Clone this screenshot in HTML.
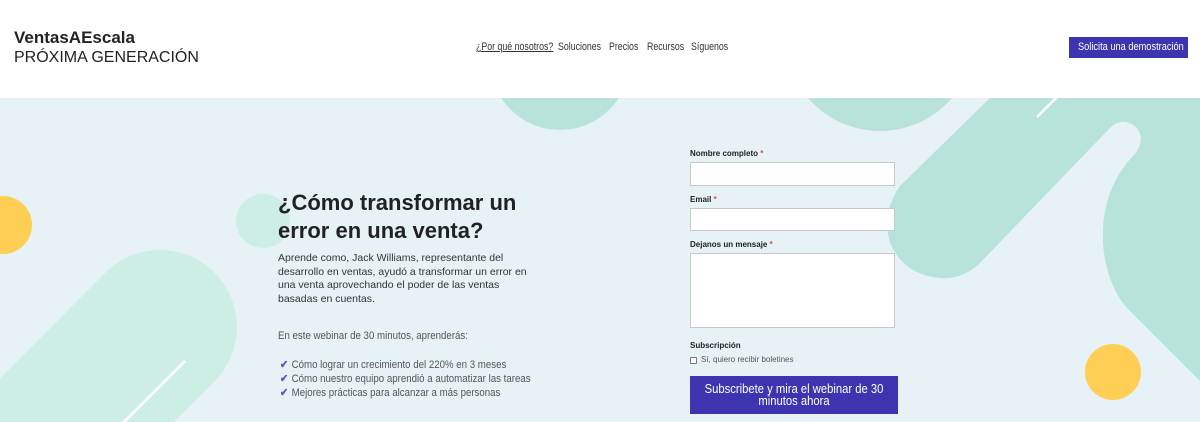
<!DOCTYPE html>
<html><head><meta charset="utf-8"><style>
*{margin:0;padding:0;box-sizing:border-box}
body{width:1200px;height:422px;overflow:hidden;background:#fff;font-family:"Liberation Sans",sans-serif;position:relative}
.a{position:absolute;white-space:nowrap}
header{position:absolute;top:0;left:0;width:1200px;height:98px;background:#fff}
.hero{position:absolute;top:98px;left:0;width:1200px;height:324px;background:#e6f2f6;overflow:hidden}
.nav{font-size:11px;color:#333;top:41px;transform:scaleX(0.8);transform-origin:left}
.lbl{font-size:8px;font-weight:bold;color:#222}
.lbl span{color:#e04a4a}
.inp{position:absolute;left:690px;width:205px;background:#fff;border:1px solid #c8c8c8}
.li{font-size:11px;color:#555;transform:scaleX(0.88);transform-origin:left}
.li b{color:#6a4fc0;font-size:11px;margin-right:4px}
</style></head><body>
<header>
<div class="a" style="left:14px;top:28px;font-size:17px;font-weight:bold;color:#222">VentasAEscala</div>
<div class="a" style="left:14px;top:49px;font-size:16px;color:#222">PRÓXIMA GENERACIÓN</div>
<div class="a nav" style="left:476px;text-decoration:underline">¿Por qué nosotros?</div>
<div class="a nav" style="left:558px">Soluciones</div>
<div class="a nav" style="left:609px">Precios</div>
<div class="a nav" style="left:647px">Recursos</div>
<div class="a nav" style="left:691px">Síguenos</div>
<div class="a" style="left:1069px;top:37px;width:119px;height:21px;background:#3d35b0;"></div>
<div class="a" style="left:1078px;top:37px;color:#fff;font-size:11px;line-height:21px;transform:scaleX(0.84);transform-origin:left">Solicita una demostración</div>
</header>
<div class="hero">
<svg width="1200" height="324" style="position:absolute;left:0;top:0">
<g transform="translate(0,-98)">
<circle cx="560" cy="60" r="70" fill="#b8e3da"/>
<circle cx="880" cy="36" r="95" fill="#b8e3da"/>
<circle cx="263" cy="221" r="27" fill="#cdeee4"/>
<circle cx="3" cy="225" r="29" fill="#ffcf55"/>
<line x1="160" y1="327" x2="-120" y2="607" stroke="#cdeee4" stroke-width="154" stroke-linecap="round"/>
<line x1="185" y1="361" x2="122" y2="424" stroke="#fff" stroke-width="2.5"/>
<path d="M990,98 L1210,98 L1210,391 L1130,311 C1098,280 1088,200 1135,154 Q1146,138 1136,127 Q1122,116 1110,128 L978,265 Q960,280 940,278 Q905,275 891,245 Q880,215 900,186 Z" fill="#b8e3da"/>
<line x1="1037" y1="117" x2="1058" y2="96" stroke="#fff" stroke-width="2.5"/>
<circle cx="1113" cy="372" r="28" fill="#ffcf55"/>
</g>
</svg>
</div>
<div class="a" style="left:278px;top:189px;font-size:22px;font-weight:bold;color:#222;line-height:28px">¿Cómo transformar un<br>error en una venta?</div>
<div class="a" style="left:278px;top:252px;font-size:10.5px;color:#333;line-height:13.7px">Aprende como, Jack Williams, representante del<br>desarrollo en ventas, ayudó a transformar un error en<br>una venta aprovechando el poder de las ventas<br>basadas en cuentas.</div>
<div class="a li" style="left:278px;top:330px">En este webinar de 30 minutos, aprenderás:</div>
<div class="a li" style="left:280px;top:358px"><b>✔</b>Cómo lograr un crecimiento del 220% en 3 meses</div>
<div class="a li" style="left:280px;top:372px"><b>✔</b>Cómo nuestro equipo aprendió a automatizar las tareas</div>
<div class="a li" style="left:280px;top:386px"><b>✔</b>Mejores prácticas para alcanzar a más personas</div>
<div class="a lbl" style="left:690px;top:149px">Nombre completo <span>*</span></div>
<div class="inp" style="top:162px;height:24px"></div>
<div class="a lbl" style="left:690px;top:195px">Email <span>*</span></div>
<div class="inp" style="top:208px;height:23px"></div>
<div class="a lbl" style="left:690px;top:240px">Dejanos un mensaje <span>*</span></div>
<div class="inp" style="top:253px;height:75px"></div>
<div class="a lbl" style="left:690px;top:341px">Subscripción</div>
<div class="a" style="left:690px;top:357px;width:7px;height:7px;border:1px solid #777;background:#fff;border-radius:1px"></div>
<div class="a" style="left:701px;top:355px;font-size:8px;color:#555">Sí, quiero recibir boletines</div>
<div class="a" style="left:690px;top:376px;width:208px;height:38px;background:#3d35b0"></div>
<div class="a" style="left:690px;top:383px;width:208px;color:#fff;font-size:12.5px;text-align:center;line-height:12px;transform:scaleX(0.9);transform-origin:center">Subscribete y mira el webinar de 30<br>minutos ahora</div>
</body></html>
